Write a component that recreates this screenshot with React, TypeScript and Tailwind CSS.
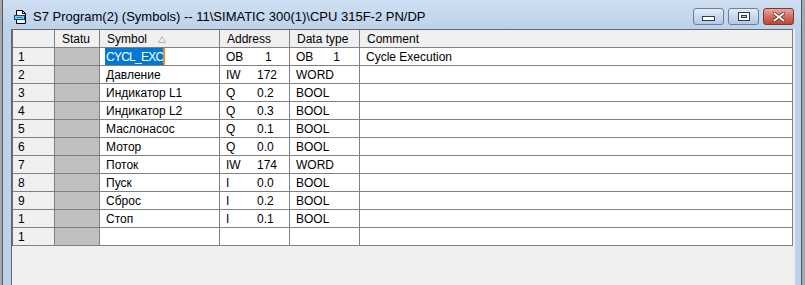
import React from "react";

type Row = {
  n: string;
  symbol: string;
  addrType: string;
  addrNum: string;
  dataType: string;
  comment: string;
  sel?: boolean;
};

const rows: Row[] = [
  { n: "1", symbol: "CYCL_EXC", addrType: "OB", addrNum: "1", dataType: "OB", comment: "Cycle Execution", sel: true },
  { n: "2", symbol: "Давление", addrType: "IW", addrNum: "172", dataType: "WORD", comment: "" },
  { n: "3", symbol: "Индикатор L1", addrType: "Q", addrNum: "0.2", dataType: "BOOL", comment: "" },
  { n: "4", symbol: "Индикатор L2", addrType: "Q", addrNum: "0.3", dataType: "BOOL", comment: "" },
  { n: "5", symbol: "Маслонасос", addrType: "Q", addrNum: "0.1", dataType: "BOOL", comment: "" },
  { n: "6", symbol: "Мотор", addrType: "Q", addrNum: "0.0", dataType: "BOOL", comment: "" },
  { n: "7", symbol: "Поток", addrType: "IW", addrNum: "174", dataType: "WORD", comment: "" },
  { n: "8", symbol: "Пуск", addrType: "I", addrNum: "0.0", dataType: "BOOL", comment: "" },
  { n: "9", symbol: "Сброс", addrType: "I", addrNum: "0.2", dataType: "BOOL", comment: "" },
  { n: "1", symbol: "Стоп", addrType: "I", addrNum: "0.1", dataType: "BOOL", comment: "" },
  { n: "1", symbol: "", addrType: "", addrNum: "", dataType: "", comment: "" },
];

const cell = "h-[18px] border-r border-b border-[#808080] leading-[19px] whitespace-nowrap";

const DocIcon = () => (
  <svg width="15" height="14" viewBox="0 0 15 14">
    <path d="M3.5 0.5h6l3 3v10h-9z" fill="#fff" stroke="#000" />
    <path d="M9.5 0.5v3h3" fill="none" stroke="#000" />
    <rect x="1.5" y="5.5" width="10" height="4" fill="#6fd8e4" stroke="#1d3f80" />
    <path d="M3.5 7.5h6" stroke="#1d7fa8" />
  </svg>
);

const TitleButton = ({ kind }: { kind: "min" | "max" | "close" }) => {
  const bg =
    kind === "close"
      ? "bg-gradient-to-b from-[#e8a89c] via-[#d2705f] to-[#c0452f] border-[#7a3a32]"
      : "bg-gradient-to-b from-[#e4edf7] via-[#c9daee] to-[#b3c9e4] border-[#6e7f95]";
  return (
    <div className={`w-[31px] h-[17px] rounded-[3px] border flex items-center justify-center ${bg}`}>
      {kind === "min" && (
        <svg width="13" height="6" viewBox="0 0 13 6" className="mt-[5px]">
          <rect x="0.5" y="0.5" width="12" height="4" fill="#fff" stroke="#2b3a4d" />
        </svg>
      )}
      {kind === "max" && (
        <svg width="12" height="9" viewBox="0 0 12 9">
          <rect x="0.5" y="0.5" width="11" height="8" fill="#fff" stroke="#2b3a4d" />
          <rect x="3.5" y="3.5" width="5" height="2" fill="#b8cbe2" stroke="#2b3a4d" />
        </svg>
      )}
      {kind === "close" && (
        <svg width="12" height="10" viewBox="0 0 12 10">
          <path d="M1.5 1.5l9 7M10.5 1.5l-9 7" stroke="#4a2a28" strokeWidth="3.4" strokeLinecap="square" />
          <path d="M1.5 1.5l9 7M10.5 1.5l-9 7" stroke="#fff" strokeWidth="1.8" strokeLinecap="square" />
        </svg>
      )}
    </div>
  );
};

const SymbolTable = () => (
  <div className="grid grid-cols-[42px_45px_120px_70px_70px_433px] w-[781px] border-l border-t border-[#696969] text-[12px] text-black">
    {/* header */}
    <div className={`${cell} bg-[#f0f0f0]`} />
    <div className={`${cell} bg-[#f0f0f0] pl-[7px]`}>Statu</div>
    <div className={`${cell} bg-[#f0f0f0] pl-[7px] flex`}>
      <span>Symbol</span>
      <svg width="8" height="7" viewBox="0 0 8 7" className="ml-[11px] mt-[6px]">
        <path d="M4 0.5L7.5 6.5H0.5z" fill="none" stroke="#b4b4b4" />
      </svg>
    </div>
    <div className={`${cell} bg-[#f0f0f0] pl-[7px]`}>Address</div>
    <div className={`${cell} bg-[#f0f0f0] pl-[7px]`}>Data type</div>
    <div className={`${cell} bg-[#f0f0f0] pl-[7px]`}>Comment</div>

    {rows.map((r, i) => (
      <React.Fragment key={i}>
        <div className={`${cell} bg-[#f0f0f0] pl-[5px]`}>{r.n}</div>
        <div className={`${cell} bg-[#c0c0c0]`} />
        <div className={`${cell} bg-white pl-[5px] flex`}>
          {r.sel ? (
            <>
              <span className="w-[58px] h-[17px] bg-[#0078d7] text-white pl-[1px] tracking-[-0.75px]">{r.symbol}</span>
              <span className="w-[2px] h-[17px] bg-[#f08a24]" />
            </>
          ) : (
            <span className="pl-[1px]">{r.symbol}</span>
          )}
        </div>
        <div className={`${cell} bg-white pl-[6px] flex`}>
          <span className="w-[31px]">{r.addrType}</span>
          <span className={r.addrType === "OB" ? "ml-[8px]" : ""}>{r.addrNum}</span>
        </div>
        <div className={`${cell} bg-white pl-[6px] flex`}>
          <span>{r.dataType}</span>
          {r.sel && <span className="ml-[20px]">1</span>}
        </div>
        <div className={`${cell} bg-white pl-[6px]`}>{r.comment}</div>
      </React.Fragment>
    ))}
  </div>
);

export default function App() {
  return (
    <div className="w-[805px] h-[285px] bg-[#a8a8a8] flex overflow-hidden font-['Liberation_Sans',Arial,sans-serif]">
      <div className="ml-[2px] w-[800px] h-[285px] border-x border-[#4a5868] bg-[#bcd2ea] flex flex-col">
        {/* title bar */}
        <div className="h-[29px] shrink-0 flex items-start bg-gradient-to-b from-[#cfdff2] to-[#bcd2ea] pl-[10px] pr-[7px]">
          <div className="mt-[10px]">
            <DocIcon />
          </div>
          <span className="ml-[5px] mt-[8px] text-[13px] leading-[17px] text-black whitespace-nowrap">
            S7 Program(2) (Symbols) -- 11\SIMATIC 300(1)\CPU 315F-2 PN/DP
          </span>
          <div className="ml-auto mt-[8px] flex gap-[4px]">
            <TitleButton kind="min" />
            <TitleButton kind="max" />
            <TitleButton kind="close" />
          </div>
        </div>

        {/* client area */}
        <div className="flex-1 flex pl-[8px] pr-[6px]">
          <div className="flex-1 bg-[#f0f0f0] border-l border-[#696969]">
            <SymbolTable />
          </div>
        </div>
      </div>
    </div>
  );
}
